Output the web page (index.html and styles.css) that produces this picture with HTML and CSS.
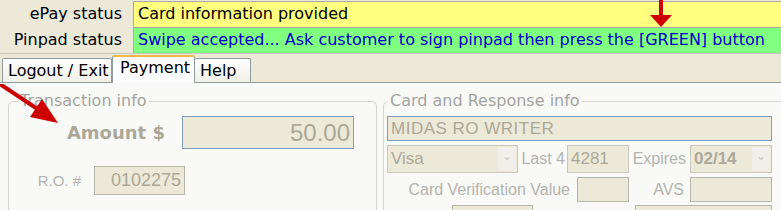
FILE: index.html
```html
<!DOCTYPE html>
<html>
<head>
<meta charset="utf-8">
<link rel="stylesheet" href="styles.css">
</head>
<body>
<div class="app">
  <div class="statuses">
    <div class="srow">
      <div class="slabel">ePay status</div>
      <div class="sbar yellow">Card information provided</div>
    </div>
    <div class="srow">
      <div class="slabel">Pinpad status</div>
      <div class="sbar green">Swipe accepted... Ask customer to sign pinpad then press the [GREEN] button</div>
    </div>
  </div>
  <div class="tabbar">
    <div class="tab t-logout">Logout / Exit</div>
    <div class="tab active t-pay">Payment</div>
    <div class="tab t-help">Help</div>
  </div>
  <div class="panel">
    <fieldset class="fs fs-trans">
      <legend>Transaction info</legend>
      <div class="amt-row">
        <div class="amt-label">Amount $</div>
        <div class="field amt-input">50.00</div>
      </div>
      <div class="ro-row">
        <div class="ro-label">R.O. #</div>
        <div class="field ro-input">0102275</div>
      </div>
    </fieldset>
    <fieldset class="fs fs-card">
      <legend>Card and Response info</legend>
      <div class="field name-input">MIDAS RO WRITER</div>
      <div class="crow r2">
        <div class="select visa"><span>Visa</span><span class="dd">&#8964;</span></div>
        <div class="clabel l-last4">Last 4</div>
        <div class="field last4">4281</div>
        <div class="clabel l-exp">Expires</div>
        <div class="select exp"><span>02/14</span><span class="dd">&#8964;</span></div>
      </div>
      <div class="crow r3">
        <div class="clabel l-cvv">Card Verification Value</div>
        <div class="field cvv"></div>
        <div class="clabel l-avs">AVS</div>
        <div class="field avs"></div>
      </div>
      <div class="crow r4">
        <div class="field b1"></div>
        <div class="field b2"></div>
      </div>
    </fieldset>
  </div>

  <svg class="arrow arrow-down" width="30" height="30" viewBox="0 0 30 30">
    <rect x="13" y="0" width="4" height="16" fill="#cc0000"/>
    <polygon points="4,15 26,15 15,27" fill="#cc0000"/>
  </svg>
  <svg class="arrow arrow-diag" width="70" height="50" viewBox="0 0 70 50">
    <line x1="0" y1="0" x2="42" y2="28" stroke="#cc0000" stroke-width="4"/>
    <polygon points="58,39 30,33 42,15" fill="#cc0000"/>
  </svg>
</div>
</body>
</html>
```
FILE: styles.css
```css
* { box-sizing: border-box; }
html, body { margin: 0; padding: 0; }
body {
  width: 781px;
  height: 210px;
  overflow: hidden;
  font-family: "Liberation Sans", Arial, sans-serif;
  background: #f9f9f8;
}
.app { position: relative; width: 781px; height: 210px; overflow: hidden; }

.statuses {
  background: #ece9d8;
  padding-top: 1px;
  font-family: "DejaVu Sans", sans-serif;
}
.srow { display: flex; height: 26px; }
.slabel {
  width: 133px;
  text-align: right;
  padding-right: 11px;
  font-size: 16px;
  line-height: 26px;
  color: #000;
}
.sbar {
  flex: 1;
  border-top: 1px solid #a9a9a9;
  border-left: 1px solid #a9a9a9;
  font-size: 16px;
  line-height: 24px;
  padding-left: 4px;
  white-space: nowrap;
}
.yellow { background: #ffff80; color: #000; }
.green { background: #80ff80; color: #0000c8; }

.tabbar {
  background: #ece9d8;
  height: 30px;
  border-top: 1px solid #c8c6bc;
  border-bottom: 1px solid #919b9c;
  display: flex;
  align-items: flex-end;
  padding-left: 2px;
  font-family: "DejaVu Sans", sans-serif;
}
.tab {
  height: 24px;
  border: 1px solid #919b9c;
  border-bottom: none;
  border-radius: 2px 2px 0 0;
  background: linear-gradient(#fefefe, #f0efe8);
  font-size: 16px;
  line-height: 24px;
  padding-left: 5px;
  color: #000;
}
.t-logout { width: 110px; }
.t-pay {
  width: 83px;
  height: 28px;
  margin-bottom: -1px;
  background: #fcfcfe;
  border-top: 2px solid #f3b84a;
  padding-left: 7px;
  line-height: 22px;
}
.t-help { width: 56px; border-left: none; }

.panel {
  display: flex;
  align-items: flex-start;
  padding: 9px 0 0 8px;
  gap: 6px;
}
.fs {
  margin: 0;
  border: 1px solid #d6d4cb;
  border-radius: 5px;
  padding: 0;
  min-width: 0;
  flex-shrink: 0;
}
.fs legend {
  font-family: "DejaVu Sans", sans-serif;
  font-size: 16px;
  color: #a3a3a0;
  padding: 0 2px;
  margin-left: 9px;
  line-height: 18px;
}
.fs-card legend { margin-left: 1px; }
.fs-trans { width: 369px; height: 130px; padding: 6px 0 0 0; }
.fs-card { width: 420px; height: 130px; padding: 6px 0 0 3px; }

.field {
  background: #ece9d8;
  border: 1px solid #7f9db9;
  color: #aca899;
  white-space: nowrap;
}
.amt-row { display: flex; align-items: center; height: 33px; }
.amt-label {
  width: 156px;
  text-align: right;
  font-family: "DejaVu Sans", sans-serif;
  font-size: 18px;
  font-weight: bold;
  color: #aca899;
}
.amt-input {
  margin-left: 17px;
  width: 172px;
  height: 33px;
  font-size: 24px;
  line-height: 31px;
  text-align: right;
  padding-right: 3px;
}
.ro-row { display: flex; align-items: center; height: 29px; margin-top: 17px; }
.ro-label {
  width: 72px;
  text-align: right;
  font-size: 15px;
  color: #b4b4ae;
}
.ro-input {
  margin-left: 13px;
  width: 91px;
  height: 29px;
  font-size: 18px;
  line-height: 27px;
  text-align: right;
  padding-right: 3px;
  border-color: #b5b8a8;
}

.name-input {
  width: 385px;
  height: 25px;
  font-size: 17px;
  line-height: 23px;
  padding-left: 3px;
  letter-spacing: 0.5px;
}
.crow { display: flex; align-items: center; }
.r2 { height: 28px; margin-top: 4px; }
.r3 { height: 25px; margin-top: 4px; }
.r4 { height: 20px; margin-top: 3px; }
.clabel { font-size: 16px; color: #b4b4ae; text-align: right; }
.select {
  display: flex;
  align-items: center;
  justify-content: space-between;
  height: 28px;
  background: #ece9d8;
  border: 1px solid #cac8bb;
  color: #aca899;
  font-size: 17px;
  padding-left: 3px;
}
.select .dd {
  width: 18px;
  height: 24px;
  background: #f0efea;
  color: #c8c8c0;
  font-size: 12px;
  text-align: center;
  line-height: 18px;
  margin-right: 1px;
}
.visa { width: 131px; }
.l-last4 { width: 47px; }
.last4 {
  margin-left: 2px;
  width: 62px;
  height: 28px;
  font-size: 17px;
  line-height: 26px;
  padding-left: 3px;
  border-color: #cac8bb;
}
.l-exp { width: 57px; }
.exp { margin-left: 4px; width: 82px; }
.exp span:first-child { font-weight: bold; }

.l-cvv { width: 183px; }
.cvv { margin-left: 7px; width: 52px; height: 25px; border-color: #b5b8a8; }
.l-avs { width: 55px; }
.avs { margin-left: 6px; width: 82px; height: 25px; border-color: #b5b8a8; }
.b1 { margin-left: 65px; width: 81px; height: 20px; border-color: #b5b8a8; }
.b2 { margin-left: 102px; width: 137px; height: 20px; border-color: #b5b8a8; }

.arrow { position: absolute; }
.arrow-down { left: 646px; top: 0; }
.arrow-diag { left: 0; top: 84px; }
```
